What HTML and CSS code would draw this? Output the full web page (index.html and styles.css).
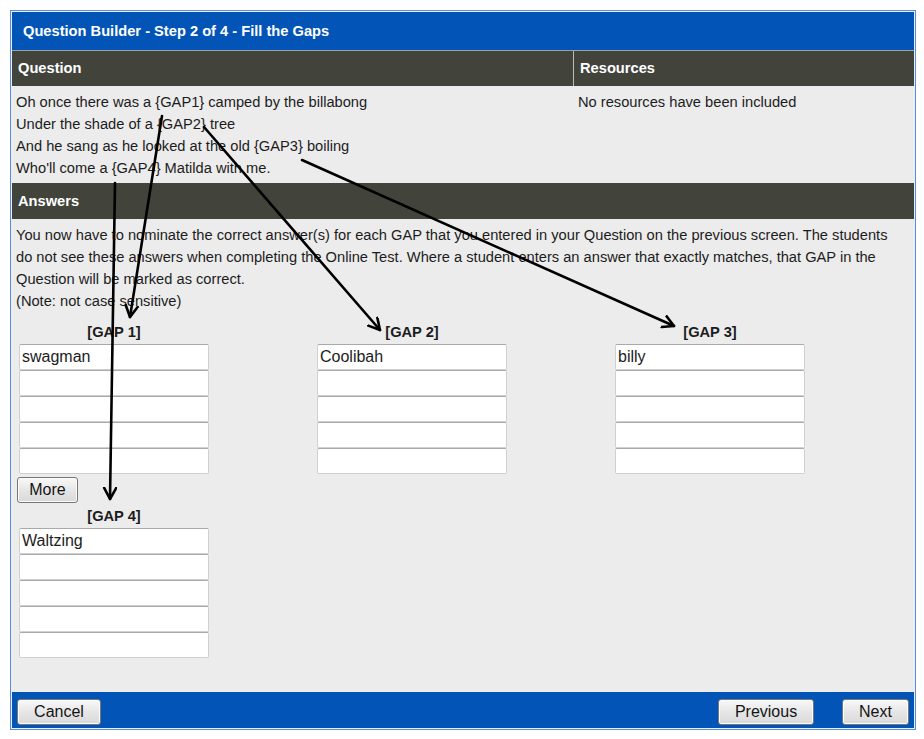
FILE: index.html
```html
<!DOCTYPE html>
<html>
<head>
<meta charset="utf-8">
<title>Question Builder</title>
<link rel="stylesheet" href="styles.css">
</head>
<body>
<div class="frame">
  <div class="titlebar">Question Builder - Step 2 of 4 - Fill the Gaps</div>
  <div class="qtable">
    <div class="qhead">
      <div class="hcell qcol">Question</div>
      <div class="hcell rcol">Resources</div>
    </div>
    <div class="qbody">
      <div class="bcell qcol">
        <div>Oh once there was a {GAP1} camped by the billabong</div>
        <div>Under the shade of a {GAP2} tree</div>
        <div>And he sang as he looked at the old {GAP3} boiling</div>
        <div>Who'll come a {GAP4} Matilda with me.</div>
      </div>
      <div class="bcell rcol">No resources have been included</div>
    </div>
  </div>
  <div class="ahead">Answers</div>
  <div class="abody">
    <p class="intro">You now have to nominate the correct answer(s) for each GAP that you entered in your Question on the previous screen. The students do not see these answers when completing the Online Test. Where a student enters an answer that exactly matches, that GAP in the Question will be marked as correct.<br>(Note: not case sensitive)</p>
    <div class="gaps">
      <div class="gap">
        <div class="gaplabel">[GAP 1]</div>
        <input class="ans" type="text" value="swagman">
        <input class="ans" type="text">
        <input class="ans" type="text">
        <input class="ans" type="text">
        <input class="ans" type="text">
      </div>
      <div class="gap">
        <div class="gaplabel">[GAP 2]</div>
        <input class="ans" type="text" value="Coolibah">
        <input class="ans" type="text">
        <input class="ans" type="text">
        <input class="ans" type="text">
        <input class="ans" type="text">
      </div>
      <div class="gap">
        <div class="gaplabel">[GAP 3]</div>
        <input class="ans" type="text" value="billy">
        <input class="ans" type="text">
        <input class="ans" type="text">
        <input class="ans" type="text">
        <input class="ans" type="text">
      </div>
    </div>
    <button class="btn more" type="button">More</button>
    <div class="gaps">
      <div class="gap">
        <div class="gaplabel gl4">[GAP 4]</div>
        <input class="ans" type="text" value="Waltzing">
        <input class="ans" type="text">
        <input class="ans" type="text">
        <input class="ans" type="text">
        <input class="ans" type="text">
      </div>
    </div>
  </div>
  <div class="footbar">
    <button class="btn cancel" type="button">Cancel</button>
    <div class="navbtns">
      <button class="btn prev" type="button">Previous</button>
      <button class="btn next" type="button">Next</button>
    </div>
  </div>
</div>
<svg class="arrows" width="924" height="739" viewBox="0 0 924 739" xmlns="http://www.w3.org/2000/svg">
  <defs>
    <marker id="ah" markerUnits="userSpaceOnUse" markerWidth="16" markerHeight="16" refX="12" refY="7" orient="auto">
      <path d="M1,1 L12,7 L1,13" fill="none" stroke="#000" stroke-width="2.6" stroke-linecap="round" stroke-linejoin="round"/>
    </marker>
  </defs>
  <g stroke="#000" stroke-width="2.6" fill="none" stroke-linecap="round">
    <line x1="162" y1="116" x2="130" y2="317" marker-end="url(#ah)"/>
    <line x1="204" y1="127" x2="380" y2="330" marker-end="url(#ah)"/>
    <line x1="302" y1="160" x2="674" y2="326" marker-end="url(#ah)"/>
    <line x1="115" y1="183" x2="110" y2="499" marker-end="url(#ah)"/>
  </g>
</svg>
</body>
</html>
```
FILE: styles.css
```css
html, body {
  margin: 0;
  padding: 0;
  background: #ffffff;
}
body {
  font-family: "Liberation Sans", Arial, sans-serif;
  font-size: 14.67px;
  color: #1c1c1c;
}
.frame {
  box-sizing: border-box;
  margin: 10px 0 0 10px;
  width: 906px;
  height: 720px;
  border: 1px solid #5a8dd4;
  padding: 1px;
  background: #eaf0f8;
  display: flex;
  flex-direction: column;
}
.titlebar {
  height: 38px;
  line-height: 38px;
  background: #0255b6;
  color: #ffffff;
  font-weight: bold;
  padding-left: 11px;
  border-bottom: 1px solid #9aa3ac;
}
.qtable {
  background: #ececec;
}
.qhead {
  display: flex;
  height: 35px;
  background: #42443c;
}
.hcell {
  color: #ffffff;
  font-weight: bold;
  line-height: 35px;
  padding-left: 6px;
  box-sizing: border-box;
}
.qcol {
  width: 562px;
  box-sizing: border-box;
}
.hcell.qcol {
  border-right: 1px solid #b9bbb5;
}
.rcol {
  flex: 1;
}
.qbody {
  display: flex;
  height: 97px;
}
.bcell {
  padding: 5px 4px 0 4px;
  line-height: 22px;
  box-sizing: border-box;
}
.ahead {
  height: 36px;
  line-height: 36px;
  background: #42443c;
  color: #ffffff;
  font-weight: bold;
  padding-left: 6px;
}
.abody {
  flex: 1;
  background: #ececec;
  padding: 5px 8px 0 4px;
}
.intro {
  margin: 0;
  line-height: 22px;
}
.gaps {
  display: grid;
  grid-template-columns: 298px 298px 298px;
}
.gap {
  display: flex;
  flex-direction: column;
  width: 190px;
  margin-left: 3px;
}
.gaplabel {
  font-weight: bold;
  text-align: center;
  height: 18px;
  line-height: 18px;
  margin: 11px 0 3px 0;
}
.gaplabel.gl4 {
  margin-top: 4px;
}
.ans {
  box-sizing: border-box;
  display: block;
  width: 190px;
  height: 26px;
  margin: 0;
  padding: 0 2px;
  border: 1px solid #d0d0d0;
  border-top-color: #a9a9a9;
  border-radius: 2px;
  background: #ffffff;
  font-family: "Liberation Sans", Arial, sans-serif;
  font-size: 16px;
  color: #1c1c1c;
  outline: none;
}
.btn {
  box-sizing: border-box;
  height: 26px;
  margin: 0;
  padding: 0;
  border: 1px solid #777777;
  border-radius: 3px;
  background: linear-gradient(#f8f8f8, #e6e6e6 50%, #d9d9d9);
  font-family: "Liberation Sans", Arial, sans-serif;
  font-size: 16px;
  color: #141414;
  box-shadow: inset 0 0 0 1px #fbfbfb;
}
.more {
  display: block;
  width: 61px;
  margin: 3px 0 0 1px;
}
.footbar {
  box-sizing: border-box;
  height: 36px;
  background: #0255b6;
  display: flex;
  align-items: center;
  justify-content: space-between;
  padding: 3px 5px 0 5px;
}
.navbtns {
  display: flex;
  gap: 28px;
}
.cancel {
  width: 84px;
}
.prev {
  width: 96px;
}
.next {
  width: 67px;
}
.arrows {
  position: absolute;
  left: 0;
  top: 0;
  pointer-events: none;
}
```
